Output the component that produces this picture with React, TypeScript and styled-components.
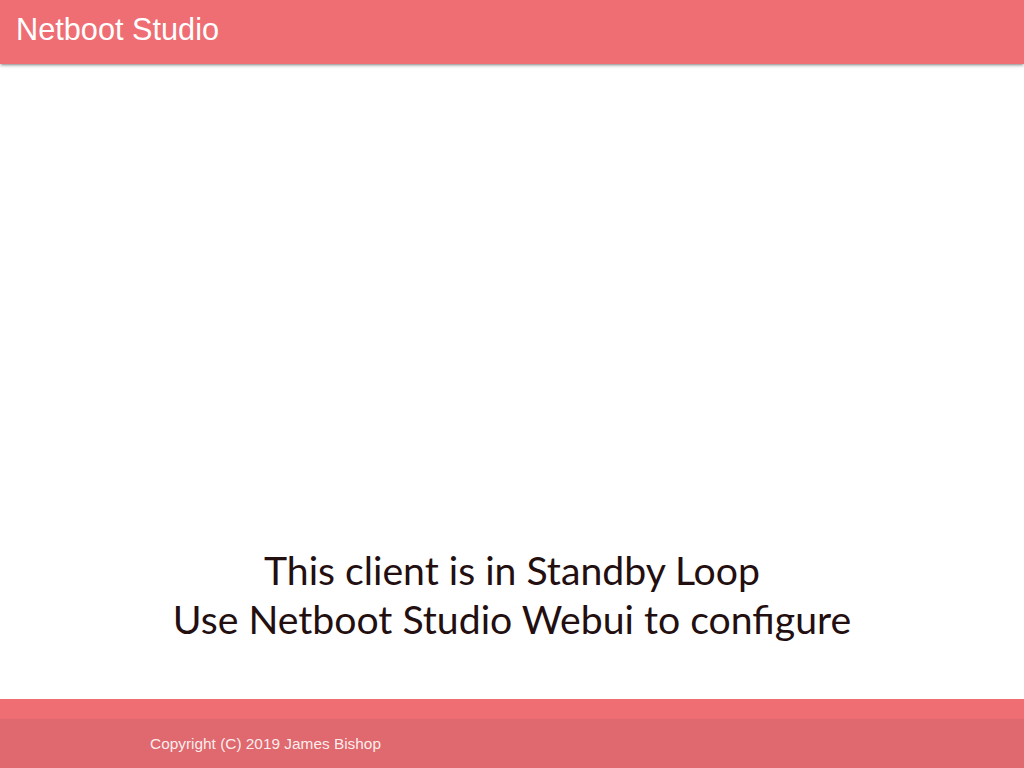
import React from 'react';
import styled, { createGlobalStyle } from 'styled-components';

const GlobalStyle = createGlobalStyle`
  html, body {
    margin: 0;
    padding: 0;
    background: #ffffff;
  }
  #root {
    min-height: 100vh;
  }
`;

const App: React.FC = () => {
  return (
    <>
      <GlobalStyle />
      <Page>
        <NavBar>
          <BrandLogo>Netboot Studio</BrandLogo>
        </NavBar>

        <Main>
          <Message>
            This client is in Standby Loop
            <br />
            Use Netboot Studio Webui to configure
          </Message>
        </Main>

        <Footer>
          <FooterCopyright>
            <FooterContainer>Copyright (C) 2019 James Bishop</FooterContainer>
          </FooterCopyright>
        </Footer>
      </Page>
    </>
  );
};

const Page = styled.div`
  display: flex;
  flex-direction: column;
  height: 100vh;
`;

const NavBar = styled.nav`
  display: flex;
  align-items: center;
  box-sizing: border-box;
  height: 64px;
  background: #ee6e73;
  padding: 0 16px 3px;
  box-shadow: 0 2px 2px 0 rgba(0, 0, 0, 0.14), 0 3px 1px -2px rgba(0, 0, 0, 0.12),
    0 1px 5px 0 rgba(0, 0, 0, 0.2);
  position: relative;
  z-index: 1;
`;

const BrandLogo = styled.a`
  color: #ffffff;
  font-family: 'Liberation Sans', Arial, sans-serif;
  font-size: 30.7px;
  line-height: 1.2;
  text-decoration: none;
`;

const Main = styled.main`
  flex: 1;
  display: flex;
  align-items: flex-end;
  justify-content: center;
  padding-bottom: 56px;
`;

const Message = styled.div`
  font-family: Lato, 'Open Sans', sans-serif;
  font-size: 39.2px;
  line-height: 49px;
  color: #230f10;
  text-align: center;
`;

const Footer = styled.footer`
  background: #ee6e73;
  padding-top: 20px;
`;

const FooterCopyright = styled.div`
  background: rgba(51, 51, 51, 0.08);
  height: 49px;
  display: flex;
  align-items: center;
`;

const FooterContainer = styled.div`
  width: 70.7%;
  margin: 0 auto;
  color: rgba(255, 255, 255, 0.9);
  font-family: 'Liberation Sans', Arial, sans-serif;
  font-size: 15.4px;
`;

export default App;
